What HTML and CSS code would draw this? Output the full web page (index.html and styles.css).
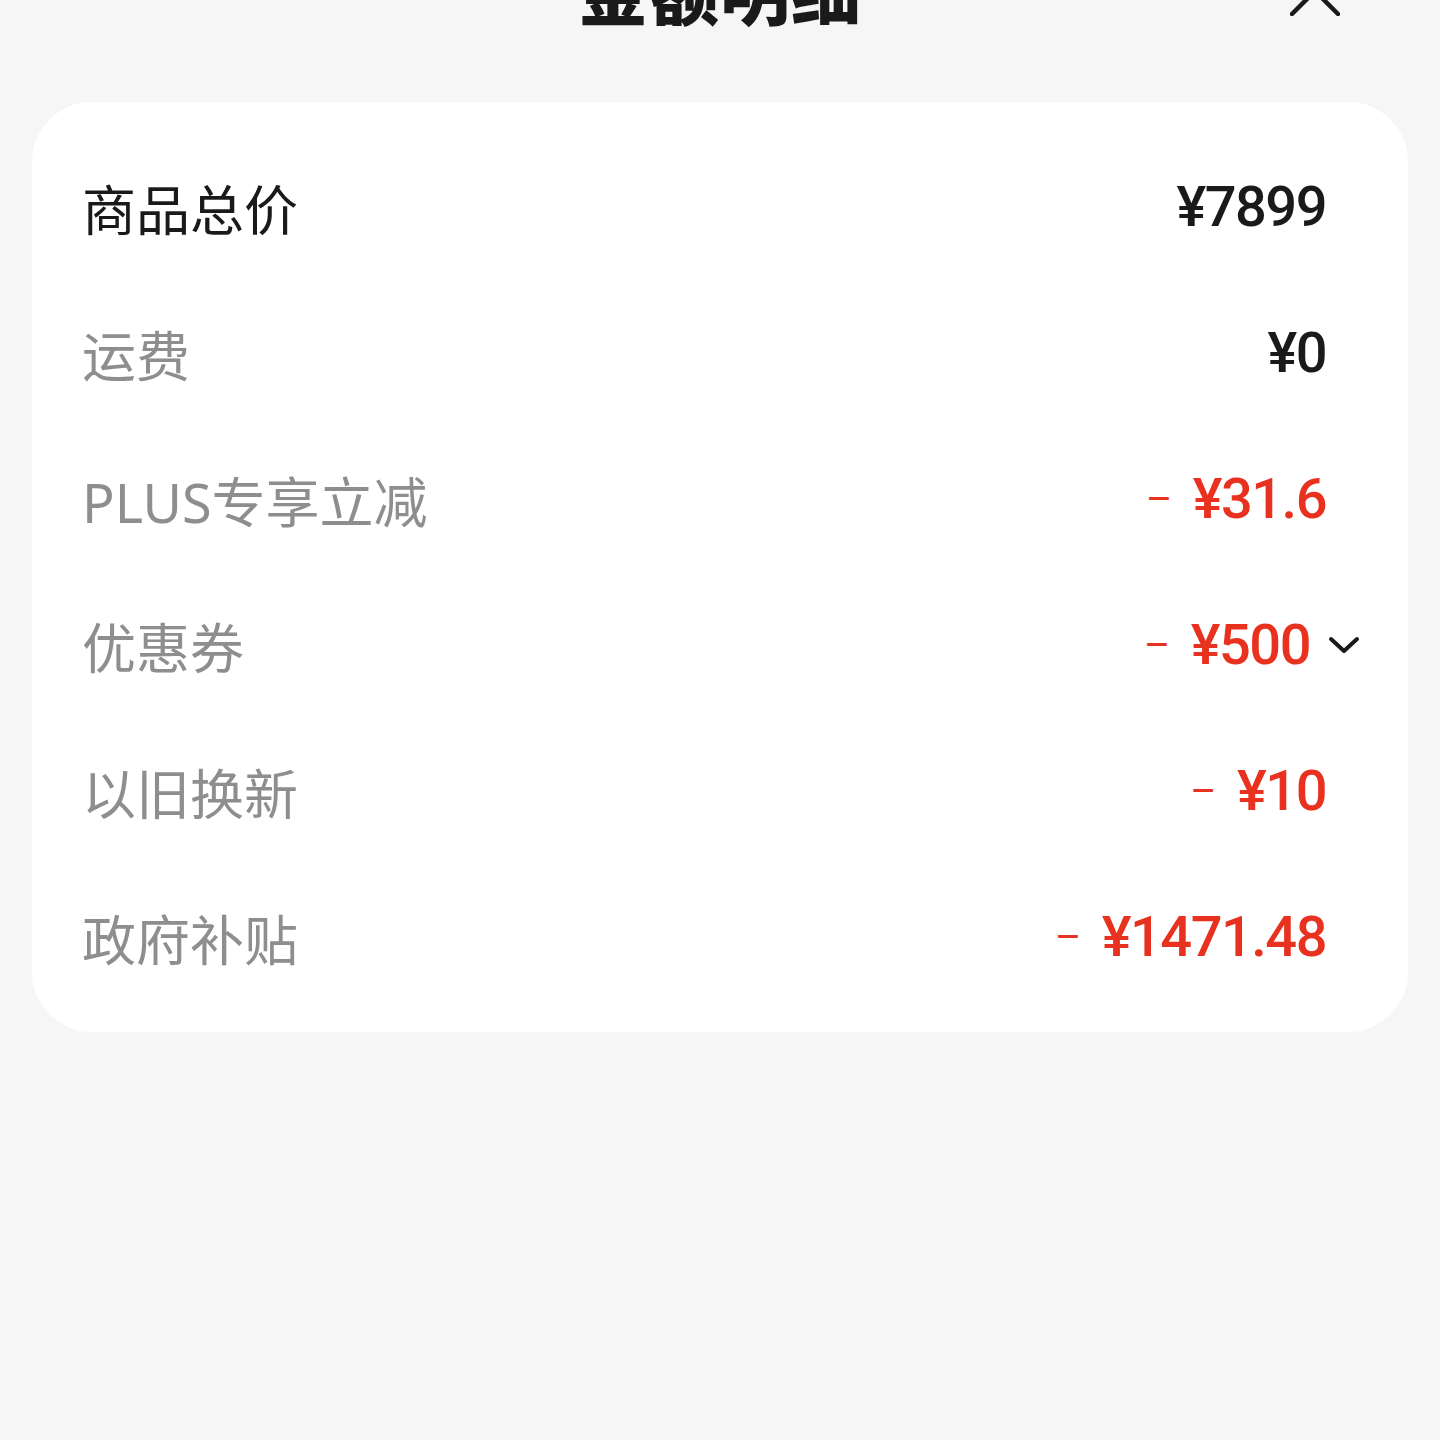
FILE: index.html
```html
<!DOCTYPE html>
<html lang="zh-CN">
<head>
  <meta charset="UTF-8" />
  <meta name="viewport" content="width=device-width, initial-scale=1.0" />
  <title>金额明细</title>
  <link rel="stylesheet" href="styles.css">
</head>
<body>
  <div class="sheet">
    <!-- Header -->
    <div class="sheet-header">
      <h2 class="sheet-title">金额明细</h2>
      <span class="close-btn">
        <svg viewBox="0 0 50 50" width="50" height="50">
          <path d="M2 2 L48 48 M48 2 L2 48" stroke="#1a1a1a" stroke-width="4.5" stroke-linecap="round" fill="none" />
        </svg>
      </span>
    </div>

    <!-- Amount details -->
    <div class="detail-card">
      <div class="detail-row">
        <span class="label label-main">商品总价</span>
        <span class="amount">¥7899</span>
      </div>
      <div class="detail-row">
        <span class="label">运费</span>
        <span class="amount">¥0</span>
      </div>
      <div class="detail-row">
        <span class="label">PLUS专享立减</span>
        <span class="amount minus"><i class="dash">–</i>¥31.6</span>
      </div>
      <div class="detail-row">
        <span class="label">优惠券</span>
        <span class="amount minus with-arrow"><i class="dash">–</i>¥500
          <svg class="arrow" viewBox="0 0 32 20" width="32" height="20">
            <path d="M3 4 L16 16 L29 4" stroke="#1a1a1a" stroke-width="4" stroke-linecap="round" stroke-linejoin="round" fill="none" />
          </svg>
        </span>
      </div>
      <div class="detail-row">
        <span class="label">以旧换新</span>
        <span class="amount minus"><i class="dash">–</i>¥10</span>
      </div>
      <div class="detail-row">
        <span class="label">政府补贴</span>
        <span class="amount minus"><i class="dash">–</i>¥1471.48</span>
      </div>
    </div>
  </div>
</body>
</html>
```

FILE: styles.css
```css
/* Reset */
* {
  margin: 0;
  padding: 0;
  box-sizing: border-box;
}

body {
  background-color: #f6f6f6;
  font-family: "Noto Sans", "Noto Sans CJK SC", sans-serif;
  color: #1a1a1a;
  height: 1440px;
  overflow: hidden;
}

.sheet {
  padding: 0 32px;
}

/* Header, only its lower part is on screen */
.sheet-header {
  position: relative;
  height: 152px;
  margin-top: -50px;
  display: flex;
  justify-content: center;
  align-items: flex-start;
}

.sheet-title {
  font-family: "Noto Sans CJK SC", sans-serif;
  font-size: 70px;
  font-weight: 900;
  line-height: 80px;
  letter-spacing: 1px;
}

.close-btn {
  position: absolute;
  right: 68px;
  top: 16px;
  width: 50px;
  height: 50px;
}

/* White card */
.detail-card {
  background-color: #ffffff;
  border-radius: 60px;
  padding: 32px 82px 22px 50px;
}

.detail-row {
  height: 146px;
  display: flex;
  justify-content: space-between;
  align-items: center;
}

.label {
  font-size: 54px;
  color: #8e8e8e;
  font-family: "Noto Sans", "Noto Sans CJK SC", sans-serif;
  font-weight: 400;
}

.label-main {
  color: #1a1a1a;
}

.amount {
  font-family: Roboto, "Noto Sans", sans-serif;
  font-size: 56px;
  font-weight: 500;
  letter-spacing: -1.5px;
  color: #1a1a1a;
  display: flex;
  align-items: center;
}

.amount.minus {
  color: #e8321f;
}

.dash {
  font-style: normal;
  font-weight: 400;
  font-size: 40px;
  margin-right: 22px;
}

.with-arrow {
  margin-right: -34px;
}

.arrow {
  margin-left: 18px;
}
```
